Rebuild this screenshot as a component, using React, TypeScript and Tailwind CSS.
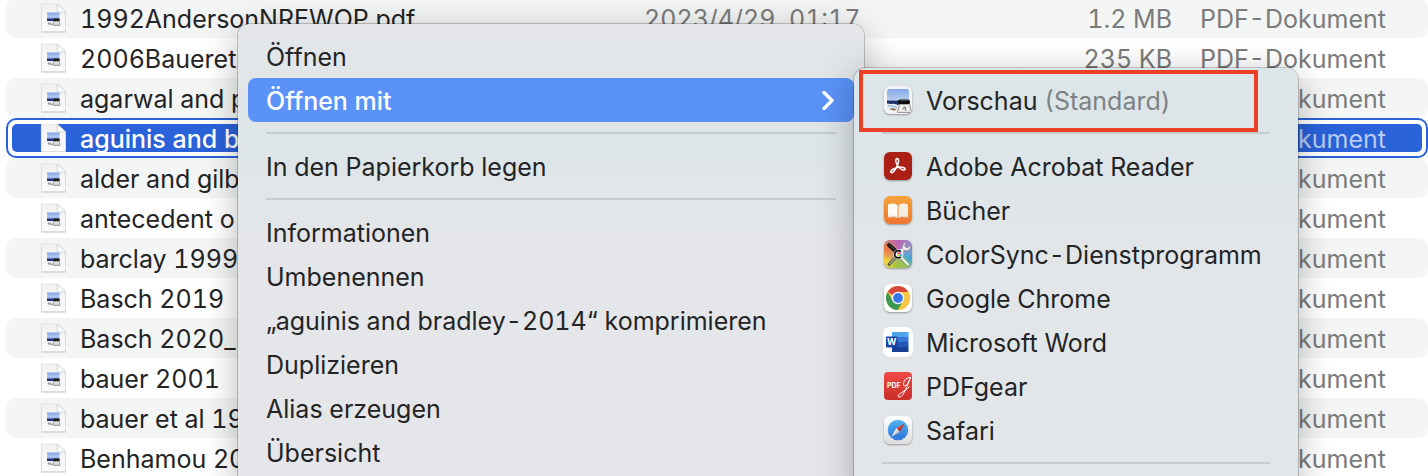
import type { ReactNode } from 'react'
import clsx from 'clsx'

interface FileRow {
  name:  string
  date?: string
  size?: string
}

const FILES: FileRow[] = [
  { name: '1992AndersonNREWOP.pdf', date: '2023/4/29, 01:17', size: '1.2 MB' },
  { name: '2006Baueret', size: '235 KB' },
  { name: 'agarwal and p' },
  { name: 'aguinis and bradley-2014' },
  { name: 'alder and gilb' },
  { name: 'antecedent o' },
  { name: 'barclay 1999.' },
  { name: 'Basch 2019' },
  { name: 'Basch 2020_' },
  { name: 'bauer 2001' },
  { name: 'bauer et al 19' },
  { name: 'Benhamou 20' },
]

const SELECTED = 3

const ACTIONS = [
  'Informationen',
  'Umbenennen',
  '„aguinis and bradley-2014“ komprimieren',
  'Duplizieren',
  'Alias erzeugen',
  'Übersicht',
]

function DocIcon() {
  return (
    <svg viewBox="0 0 26 30" className="h-[30px] w-[26px] shrink-0" aria-hidden="true">
      <defs>
        <linearGradient id="paper" x1="0" y1="0" x2="0" y2="1">
          <stop offset="0" stopColor="#f1f1f1" />
          <stop offset="1" stopColor="#fcfcfc" />
        </linearGradient>
      </defs>
      <path d="M1 1.5h16.5L26 9v19.500a1 1 0 0 1-1 1H2a1 1 0 0 1-1-1z" fill="#c4c4c4" />
      <path d="M1.300 1h16l8.200 8v18.800a.8.8 0 0 1-.8.8H2.100a.8.8 0 0 1-.8-.8z" fill="url(#paper)" stroke="#d8d8d8" strokeWidth=".6" />
      <path d="M17.300 1l8.200 8h-7.400a.8.8 0 0 1-.8-.8z" fill="#fff" stroke="#c4c4c4" strokeWidth=".7" />
      <path d="M7 9.500h12.500v8H7z" fill="#a9c1f0" />
      <path d="M7 9.500h12.500v2.500H7z" fill="#94b1ea" />
      <path d="M7 15.500h12.500v2.500H7z" fill="#23357c" />
      <path d="M7 18h12v4.500H8.500z" fill="#e6e8ea" />
      <path d="M7.500 19.500l3 .5 2.500 2-4.500-.5z" fill="#929292" />
      <rect x="13.500" y="15.500" width="6" height="2.800" rx="1" fill="#1c1c1c" />
      <path d="M13.700 18.400h5.600l.7 4h-7z" fill="#eee" stroke="#777" strokeWidth=".7" />
      <path d="M14.500 21h4" stroke="#888" strokeWidth=".6" />
    </svg>
  )
}

function AppTile({ children, className }: { children: ReactNode; className?: string }) {
  return (
    <span className={clsx('block size-7 shrink-0 overflow-hidden', className)}>
      <svg viewBox="0 0 28 28" className="size-7" aria-hidden="true">{children}</svg>
    </span>
  )
}

function PreviewIcon() {
  return (
    <AppTile className="rounded-md bg-[#f4f4f3] shadow-[0_1px_2px_rgba(0,0,0,0.35)]">
      <defs>
        <linearGradient id="sky" x1="0" y1="0" x2="0" y2="1">
          <stop offset="0" stopColor="#86a9e6" />
          <stop offset="1" stopColor="#b9cef2" />
        </linearGradient>
      </defs>
      <rect x="3" y="3" width="22" height="22" rx="2.500" fill="#eef0f0" />
      <path d="M3 14.500V5.500A2.500 2.500 0 0 1 5.500 3h17A2.500 2.500 0 0 1 25 5.500v9z" fill="url(#sky)" />
      <path d="M3 14.500h22v3L14 19 3 18z" fill="#1c3069" />
      <path d="M3 17.500l4 .6 3-.4 4 1.300v3H3z" fill="#dfe9f1" />
      <path d="M4 19.500l4 .5 5 1.500" stroke="#6d8db0" strokeWidth=".7" fill="none" />
      <path d="M5 23l4-1 4 1.500-3 1.300z" fill="#8a7558" />
      <path d="M15.500 17.500l-2 9h14l-2-9z" fill="#e3e3e1" stroke="#7d7d7d" strokeWidth=".7" />
      <path d="M17.500 19l-1 6M22.500 19l1.500 6" stroke="#fff" strokeWidth="1.200" />
      <path d="M18.500 23l2.500-2 1 3.500" stroke="#444" strokeWidth=".8" fill="none" />
      <rect x="14" y="13.500" width="12" height="4.800" rx="2.200" fill="#0c0c0c" />
      <path d="M16 14.500h8" stroke="#555" strokeWidth=".8" />
    </AppTile>
  )
}

function AcrobatIcon() {
  return (
    <AppTile className="rounded-md bg-[#ab1f14] shadow-[0_1px_2px_rgba(0,0,0,0.35)]">
      <path
        d="M13 6.600c2.300 0 1.800 3.900.2 7.300-1.500 3.200-3.800 6.900-5.500 6.900-1.800 0-1.300-2.400 1.700-3.800 3-1.400 7.600-2.200 10-1.600 2.800.7 1.900 2.800-.1 2.500-2.800-.5-6.900-4.700-7.500-8.400-.2-1.600.2-2.900 1.200-2.900z"
        fill="none" stroke="#fff" strokeWidth="1.500" strokeLinejoin="round"
      />
    </AppTile>
  )
}

function BooksIcon() {
  return (
    <AppTile className="rounded-md bg-linear-to-b from-[#f6a23b] to-[#ec7630] shadow-[0_1px_2px_rgba(0,0,0,0.35)]">
      <path d="M13.500 9.200C11.500 7.300 7 7.200 4.500 8.400a.8.8 0 0 0-.5.700v11.700c0 .6.4.8.900.7 3-.8 6.500-.8 8.600.4z" fill="#fffaf3" />
      <path d="M14.500 9.200c2-1.900 6.500-2 9-.8.300.1.500.4.500.700v11.700c0 .6-.4.800-.9.700-3-.8-6.500-.8-8.600.4z" fill="#f6efe6" />
      <path d="M4 20.800c3-1 7-.9 9.500.7M24 20.800c-3-1-7-.9-9.500.7" stroke="#cfc4b8" strokeWidth=".7" fill="none" />
    </AppTile>
  )
}

function ColorSyncIcon() {
  return (
    <AppTile className="rounded-md bg-conic from-[#bb65b8] via-[#3fa9d6] via-30% to-[#bb65b8] shadow-[0_1px_2px_rgba(0,0,0,0.35)]">
      <defs>
        <linearGradient id="warm" x1="1" y1="0" x2="0" y2="1">
          <stop offset=".4" stopColor="#f3b13c" stopOpacity="0" />
          <stop offset=".8" stopColor="#f0d43a" />
        </linearGradient>
        <radialGradient id="pink" cx=".1" cy=".3" r=".45">
          <stop offset="0" stopColor="#f0783f" />
          <stop offset="1" stopColor="#f0783f" stopOpacity="0" />
        </radialGradient>
        <radialGradient id="lime" cx=".55" cy="1" r=".5">
          <stop offset="0" stopColor="#8cc63f" />
          <stop offset="1" stopColor="#8cc63f" stopOpacity="0" />
        </radialGradient>
      </defs>
      <path d="M0 0h28v28H0z" fill="url(#warm)" />
      <path d="M0 0h28v28H0z" fill="url(#pink)" />
      <path d="M0 0h28v28H0z" fill="url(#lime)" />
      <path d="M5 24.500L12 17" stroke="#5d5d58" strokeWidth="3" strokeLinecap="round" />
      <path d="M5.500 24L12 17" stroke="#c6c6bd" strokeWidth="1" />
      <path d="M16.500 12l5-5" stroke="#f4f4f4" strokeWidth="2.600" />
      <path d="M22.500 2.300l-2 3.200.9 2 2.300.6 2.500-2.600c.8 3-1.200 5.200-4 5-3.400-.2-4.600-3.200-3-5.800.8-1.400 2-2.200 3.300-2.400z" fill="#f4f4f4" stroke="#777" strokeWidth=".4" />
      <path d="M5 5l7 6.500" stroke="#161616" strokeWidth="4" strokeLinecap="round" />
      <path d="M4.500 4l6 5.500" stroke="#666" strokeWidth=".7" />
      <path d="M16 16l8.500 9" stroke="#fff" strokeWidth="1.800" />
      <circle cx="14.300" cy="14.300" r="5" fill="#fff" />
      <path d="M16.800 11.800a3.600 3.600 0 1 0 0 5" fill="none" stroke="#111" strokeWidth="1.800" />
      <path d="M13.300 12.300h3.500v2h-3.500z" fill="#e84b9b" />
      <path d="M15.300 14.300h3v2h-3z" fill="#35b3ce" />
      <path d="M13 14.300h2.300v2H13z" fill="#e5cd31" />
    </AppTile>
  )
}

function ChromeIcon() {
  return (
    <AppTile className="rounded-md bg-white shadow-[0_1px_2px_rgba(0,0,0,0.35)]">
      <circle cx="14" cy="14" r="12" fill="#f6c644" />
      <path d="M14 14L3.600 8A12 12 0 0 1 24.400 8z" fill="#d8473a" />
      <path d="M3.600 8A12 12 0 0 0 14 26l5.200-9L14 14l-5.200 3z" fill="#3c9a50" />
      <path d="M14 8h10.400A12 12 0 0 1 14 26l5.200-9z" fill="#f6c644" />
      <circle cx="14" cy="14" r="6.200" fill="#fff" />
      <circle cx="14" cy="14" r="4.900" fill="#3b78e7" />
    </AppTile>
  )
}

function WordIcon() {
  return (
    <AppTile className="rounded-md bg-white ring-1 ring-white">
      <path d="M8 4h16.500v5H8z" fill="#4ea3ea" />
      <path d="M8 9h16.500v5H8z" fill="#3479d6" />
      <path d="M8 14h16.500v5H8z" fill="#2456b8" />
      <path d="M8 19h16.500v5H8z" fill="#173f94" />
      <rect x="2" y="8.500" width="11.500" height="11" rx="1" fill="#1b45a5" />
      <text x="7.700" y="17.300" textAnchor="middle" fontSize="9" fontWeight="700" fill="#fff" fontFamily="Inter, sans-serif">W</text>
    </AppTile>
  )
}

function PdfGearIcon() {
  return (
    <AppTile className="rounded-sm bg-linear-to-b from-[#ee4a44] to-[#c92e28]">
      <text x="3" y="16" fontSize="7" fontWeight="700" fill="#fff" fontFamily="Inter, sans-serif">PDF</text>
      <path d="M27 5.500c-4-.6-7 2.500-7.500 6-.4 3 2 3.400 4 .4 1.300-2 2.300-4.400 2.800-6.200-2 5.500-4.600 12.500-7.500 17-1.800 2.700-4.800 3.200-4.600 1.200.3-2.300 6-4.300 11.500-9.400" fill="none" stroke="#fff" strokeWidth="1" />
    </AppTile>
  )
}

function SafariIcon() {
  return (
    <AppTile className="rounded-md bg-linear-to-b from-white to-[#dedede] shadow-[0_1px_2px_rgba(0,0,0,0.35)]">
      <defs>
        <linearGradient id="compass" x1="0" y1="0" x2="0" y2="1">
          <stop offset="0" stopColor="#4bb4ef" />
          <stop offset="1" stopColor="#2a70d8" />
        </linearGradient>
      </defs>
      <circle cx="14" cy="14" r="10.300" fill="url(#compass)" />
      <circle cx="14" cy="14" r="9" fill="none" stroke="#a8d6f6" strokeWidth=".8" strokeDasharray=".5 1.500" />
      <path d="M20.500 7.500L12.300 12.300l3.400 3.400z" fill="#e8453a" />
      <path d="M7.500 20.500l4.800-8.200 3.400 3.400z" fill="#f2f2f2" />
      <path d="M20.500 7.500L15.700 15.700 14 14z" fill="#b82d2a" />
      <path d="M7.500 20.500l8.200-4.800L14 14z" fill="#c3c8cf" />
    </AppTile>
  )
}

const APPS = [
  { label: 'Adobe Acrobat Reader',     icon: AcrobatIcon },
  { label: 'Bücher',                   icon: BooksIcon },
  { label: 'ColorSync-Dienstprogramm', icon: ColorSyncIcon },
  { label: 'Google Chrome',            icon: ChromeIcon },
  { label: 'Microsoft Word',           icon: WordIcon },
  { label: 'PDFgear',                  icon: PdfGearIcon },
  { label: 'Safari',                   icon: SafariIcon },
]

function Separator() {
  return (
    <div role="separator" className="flex h-[22px] items-center px-[18px]">
      <div className="h-0.5 w-full bg-[#c6cbce]" />
    </div>
  )
}

function MenuItem({ children, active }: { children: ReactNode; active?: boolean }) {
  return (
    <button
      type="button"
      role="menuitem"
      className={clsx(
        'flex h-11 w-full items-center justify-between rounded-lg pr-5 pl-[18px] text-left whitespace-nowrap',
        active && 'bg-[#5a92f7] font-medium text-white'
      )}
    >
      <span className="pt-0.5">{children}</span>
      {active && (
        <svg viewBox="0 0 12 20" className="h-5 w-3" fill="none" stroke="currentColor" strokeWidth="3.500" strokeLinecap="round" strokeLinejoin="round" aria-hidden="true">
          <path d="M2 2.500l8 8-8 8" />
        </svg>
      )}
    </button>
  )
}

function AppItem({ icon, children }: { icon: ReactNode; children: ReactNode }) {
  return (
    <button type="button" role="menuitem" className="flex h-11 w-full items-center gap-3.5 px-5 text-left whitespace-nowrap">
      {icon}
      <span className="pt-0.5">{children}</span>
    </button>
  )
}

function FileTable() {
  return (
    <table className="-mt-0.5 w-full table-fixed border-separate border-spacing-0">
      <colgroup>
        <col />
        <col className="w-[262px]" />
        <col className="w-[280px]" />
        <col className="w-[242px]" />
      </colgroup>
      <tbody>
        {FILES.map((file, i) => {
          const selected = i === SELECTED
          const cell = clsx(
            'h-10 p-0',
            selected && 'border-y-2 border-[#2a62d9] py-1',
            !selected && i % 2 === 0 && 'bg-[#f4f5f5]'
          )
          const inner = clsx('flex items-center overflow-hidden whitespace-nowrap', selected ? 'h-7 bg-[#2a62d9]' : 'h-10')
          const muted = selected ? 'text-[#b9cbf3]' : 'text-[#7b7b7b]'
          return (
            <tr key={file.name} aria-selected={selected}>
              <td className={clsx(cell, 'rounded-l-[10px]', selected && 'border-l-2 pl-1')}>
                <div className={clsx(inner, 'gap-3.5', selected ? 'rounded-l-[5px] pl-7 font-medium text-white' : 'pl-[34px]')}>
                  <DocIcon />
                  <span className="pt-0.5">{file.name}</span>
                </div>
              </td>
              <td className={cell}>
                <div className={clsx(inner, muted)}>
                  <span className="pt-0.5">{file.date}</span>
                </div>
              </td>
              <td className={cell}>
                <div className={clsx(inner, muted, 'justify-end pr-3.5')}>
                  <span className="pt-0.5">{file.size}</span>
                </div>
              </td>
              <td className={clsx(cell, 'rounded-r-[10px]', selected && 'border-r-2 pr-1')}>
                <div className={clsx(inner, muted, 'pl-3.5', selected && 'rounded-r-[5px]')}>
                  <span className="pt-0.5">PDF-Dokument</span>
                </div>
              </td>
            </tr>
          )
        })}
      </tbody>
    </table>
  )
}

export default function App() {
  return (
    <main className="relative overflow-hidden bg-white pl-1.5 font-['Inter',sans-serif] text-[25px] leading-8 text-[#232425] tabular-nums">
      <FileTable />

      {/* Context menu */}
      <div
        role="menu"
        className="absolute top-6 left-[238px] w-[626px] rounded-xl bg-linear-to-b from-[#e4e6e8] via-[#dde5e8] via-25% to-[#e5e6e9] to-50% px-2.5 pt-2.5 pb-5 shadow-[0_0_0_1px_rgba(0,0,0,0.2),0_8px_36px_rgba(0,0,0,0.28)]"
      >
        <MenuItem>Öffnen</MenuItem>
        <MenuItem active>Öffnen mit</MenuItem>
        <Separator />
        <MenuItem>In den Papierkorb legen</MenuItem>
        <Separator />
        {ACTIONS.map(label => <MenuItem key={label}>{label}</MenuItem>)}
      </div>

      {/* Submenu with the apps that open the file */}
      <div
        role="menu"
        className="absolute top-[68px] left-[854px] w-[444px] rounded-xl bg-linear-to-b from-[#dce5e8] via-[#dde5e8] via-20% to-[#e3e6e8] to-50% px-2.5 pt-2.5 pb-5 shadow-[0_0_0_1px_rgba(0,0,0,0.2),0_8px_36px_rgba(0,0,0,0.28)]"
      >
        <AppItem icon={<PreviewIcon />}>
          Vorschau <span className="text-[#7d8385]">(Standard)</span>
        </AppItem>
        <Separator />
        {APPS.map(app => {
          const Icon = app.icon
          return <AppItem key={app.label} icon={<Icon />}>{app.label}</AppItem>
        })}
        <Separator />
      </div>

      {/* Marker around the default app */}
      <div className="pointer-events-none absolute top-[70px] left-[859px] h-[62px] w-[399px] border-4 border-[#ec4026]" />
    </main>
  )
}
